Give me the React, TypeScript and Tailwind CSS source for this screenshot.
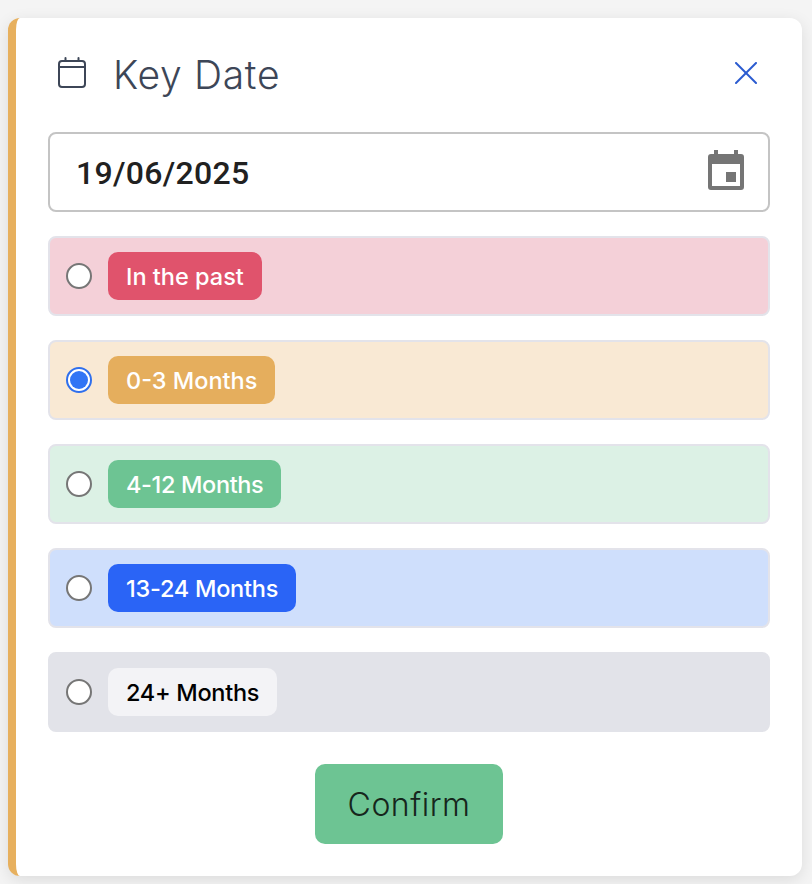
const options = [
  { label: "In the past", row: "bg-[#f4d0d8] border-[#e3e3ea]", tag: "bg-[#e0536c] text-white" },
  { label: "0-3 Months", row: "bg-[#f9e9d4] border-[#e3e3ea]", tag: "bg-[#e5ae5d] text-white", checked: true },
  { label: "4-12 Months", row: "bg-[#dcf1e5] border-[#e3e3ea]", tag: "bg-[#6dc493] text-white tracking-[-0.36px]" },
  { label: "13-24 Months", row: "bg-[#cfdffc] border-[#e3e3ea]", tag: "bg-[#2a64f6] text-white tracking-[-0.25px]" },
  { label: "24+ Months", row: "bg-[#e2e3e9] border-[#e2e3e9]", tag: "bg-[#f3f3f6] text-black tracking-[-0.3px]" },
];

function CalendarOutline() {
  return (
    <svg width="30" height="34" viewBox="0 0 30 34" fill="none" stroke="#3d4657" strokeWidth="2" strokeLinecap="round">
      <rect x="2" y="5" width="26" height="26" rx="3" />
      <line x1="2" y1="11" x2="28" y2="11" />
      <line x1="8.5" y1="2" x2="8.5" y2="5" />
      <line x1="21.5" y1="2" x2="21.5" y2="5" />
    </svg>
  );
}

function CalendarFilled() {
  return (
    <svg className="mb-1" width="36" height="40" viewBox="0 0 36 40" fill="#757575">
      <path d="M6 0h4v4h16V0h4v4h3a3 3 0 0 1 3 3v30a3 3 0 0 1-3 3H3a3 3 0 0 1-3-3V7a3 3 0 0 1 3-3h3V0zM4 14v22h28V14H4z" />
      <rect x="18" y="22" width="10" height="10" />
    </svg>
  );
}

function CloseIcon() {
  return (
    <svg width="22" height="22" viewBox="0 0 22 22" fill="none" stroke="#2a5bd0" strokeWidth="2" strokeLinecap="round">
      <line x1="1" y1="1" x2="21" y2="21" />
      <line x1="21" y1="1" x2="1" y2="21" />
    </svg>
  );
}

function Radio({ checked }: { checked?: boolean }) {
  if (checked) {
    return (
      <span className="flex h-[26px] w-[26px] items-center justify-center rounded-full border-2 border-[#2f6fed] bg-white">
        <span className="h-[18px] w-[18px] rounded-full bg-[#3275f5]" />
      </span>
    );
  }
  return <span className="h-[26px] w-[26px] rounded-full border-2 border-[#767676] bg-white" />;
}

export default function App() {
  return (
    <div className="h-[884px] w-[812px] bg-[#f4f4f4] pb-2 pl-2 pr-[10px] pt-[18px] font-['Inter',sans-serif]">
      <div className="flex h-[858px] flex-col rounded-xl border-l-8 border-[#e7b05e] bg-white px-8 pb-8 shadow-[0_4px_16px_rgba(0,0,0,0.1)]">
        <div className="flex h-[114px] items-center justify-between pb-1 pl-[9px] pr-[13px]">
          <div className="flex items-center gap-[26px]">
            <CalendarOutline />
            <h1 className="pt-1 text-[39px] font-light tracking-[0.7px] text-[#3d4657]">Key Date</h1>
          </div>
          <button>
            <CloseIcon />
          </button>
        </div>

        <div className="flex h-20 items-center justify-between rounded-lg border-2 border-[#c4c4c4] pl-[26px] pr-6">
          <span className="pt-0.5 font-['Roboto',sans-serif] text-[32px] font-medium tracking-[0.3px] text-[#212121]">19/06/2025</span>
          <CalendarFilled />
        </div>

        <div className="mt-6 flex flex-col gap-6">
          {options.map((o) => (
            <label key={o.label} className={`flex h-20 items-center gap-4 rounded-lg border-2 pl-4 ${o.row}`}>
              <Radio checked={o.checked} />
              <span className={`flex h-12 items-center rounded-[10px] px-[18px] pt-px text-[23.5px] font-medium ${o.tag}`}>{o.label}</span>
            </label>
          ))}
        </div>

        <div className="mt-8 flex justify-center">
          <button className="h-20 w-[188px] rounded-[10px] bg-[#6dc493] pt-0.5 text-[32px] font-light tracking-[0.5px] text-[#16261c]">Confirm</button>
        </div>
      </div>
    </div>
  );
}
